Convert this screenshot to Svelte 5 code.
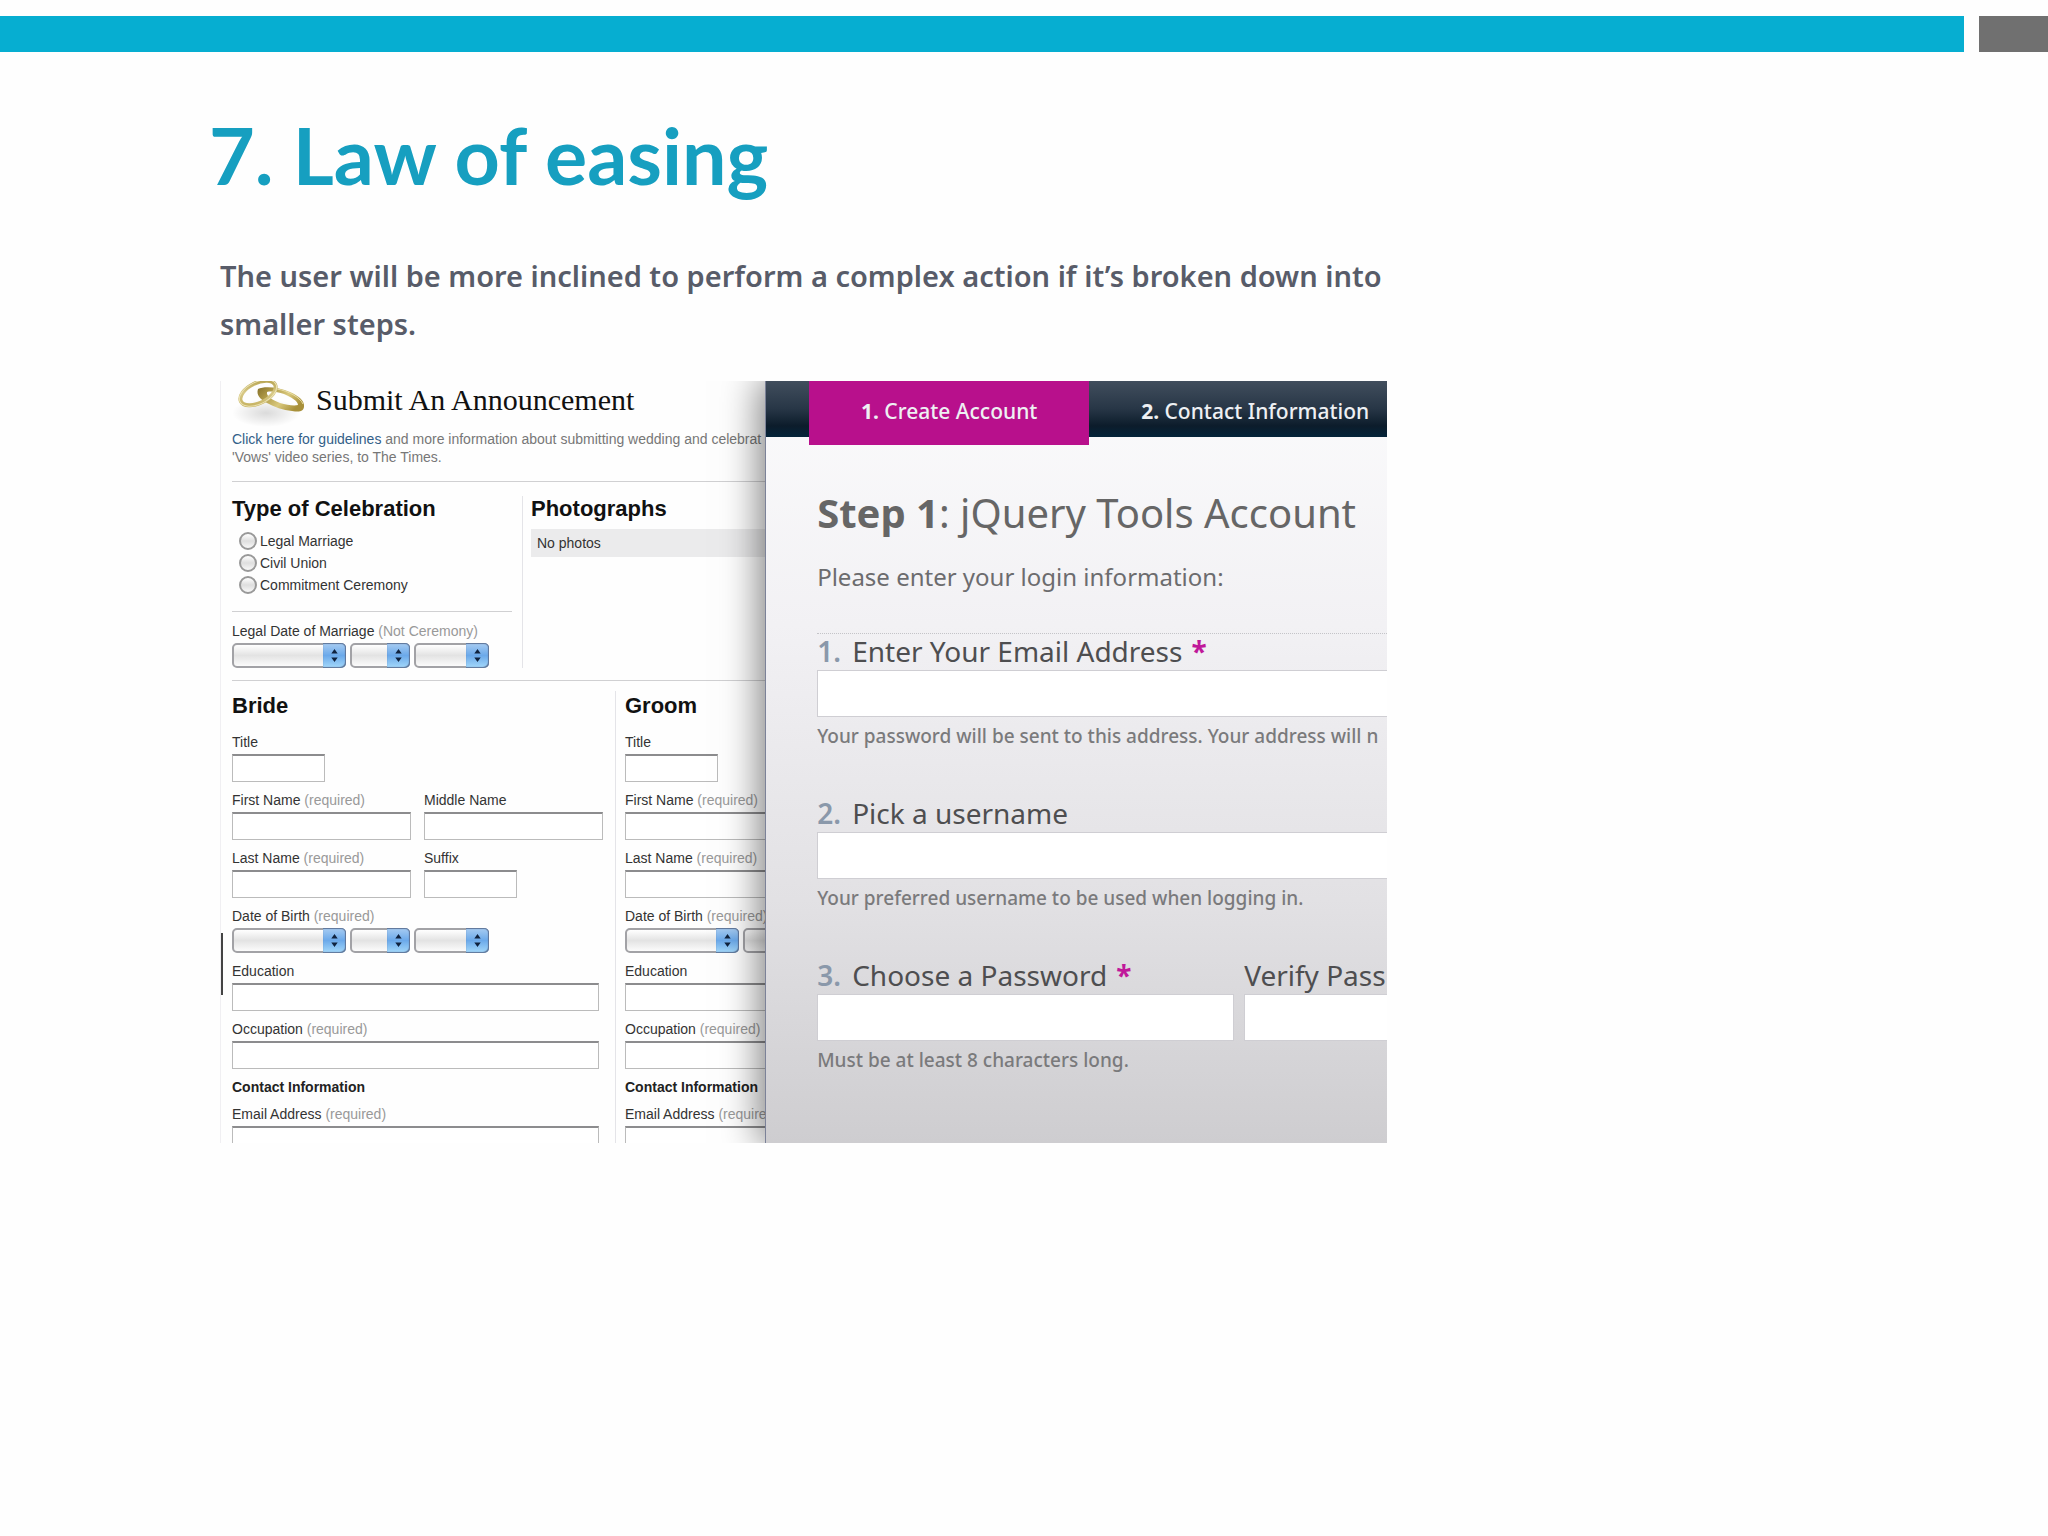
<script lang="ts">
	type Field = { label: string; required?: boolean; size: 'short' | 'medium' | 'wide' };

	const ceremonies = ['Legal Marriage', 'Civil Union', 'Commitment Ceremony'];
	const people = ['Bride', 'Groom'];
	const dateParts = ['month', 'day', 'year'];

	const nameRows: Field[][] = [
		[{ label: 'Title', size: 'short' }],
		[
			{ label: 'First Name', required: true, size: 'medium' },
			{ label: 'Middle Name', size: 'medium' }
		],
		[
			{ label: 'Last Name', required: true, size: 'medium' },
			{ label: 'Suffix', size: 'short' }
		]
	];

	const detailRows: Field[][] = [
		[{ label: 'Education', size: 'wide' }],
		[{ label: 'Occupation', required: true, size: 'wide' }]
	];

	const contactRows: Field[][] = [[{ label: 'Email Address', required: true, size: 'wide' }]];
</script>

{#snippet dateSelects(name: string)}
	<div class="selects">
		{#each dateParts as part}
			<span class="select {part}">
				<select aria-label="{name} {part}"><option></option></select>
				<svg viewBox="0 0 23 25" aria-hidden="true">
					<path d="M11.5 6l3.2 4.5H8.3zM11.5 19l3.2-4.5H8.3z" fill="#10233f" />
				</svg>
			</span>
		{/each}
	</div>
{/snippet}

{#snippet fieldRows(rows: Field[][])}
	{#each rows as row}
		<div class="row">
			{#each row as field}
				<label class="field {field.size}">
					<span>{field.label} {#if field.required}<small>(required)</small>{/if}</span>
					<input type="text" />
				</label>
			{/each}
		</div>
	{/each}
{/snippet}

<div class="slide">
	<div class="ribbon">
		<div class="ribbon-main"></div>
		<div class="ribbon-end"></div>
	</div>

	<main>
		<h1>7. Law of easing</h1>
		<p class="lead">
			The user will be more inclined to perform a complex action if it’s broken down into<br />
			smaller steps.
		</p>

		<div class="figure">
			<form class="announcement">
				<header>
					<svg class="rings" viewBox="0 0 76 48" aria-hidden="true">
						<defs>
							<linearGradient id="band" x1="0" y1="0" x2="1" y2="0.5">
								<stop offset="0" stop-color="#85702a" />
								<stop offset="0.3" stop-color="#b09b48" />
								<stop offset="0.65" stop-color="#d9c87c" />
								<stop offset="1" stop-color="#a8903a" />
							</linearGradient>
							<linearGradient id="loop" x1="0" y1="1" x2="1" y2="0">
								<stop offset="0" stop-color="#c0ab55" />
								<stop offset="0.5" stop-color="#d8c987" />
								<stop offset="1" stop-color="#ab973f" />
							</linearGradient>
							<radialGradient id="shade">
								<stop offset="0" stop-color="#000" stop-opacity="0.14" />
								<stop offset="1" stop-color="#000" stop-opacity="0" />
							</radialGradient>
						</defs>
						<ellipse cx="34" cy="32" rx="34" ry="14" fill="url(#shade)" />
						<path
							d="M26 8C32 5 47 6 58 11c9 4 15 9 14 15-1 5-5 5-12 4-9-1-18-4-25-8-7-4-11-8-9-14zm9 3c-1 4 5 8 13 11 7 2 14 3 18 2 0-4-7-8-14-11-6-2-13-3-17-2z"
							fill="url(#band)"
							fill-rule="evenodd"
						/>
						<path d="M45 8c11 2 23 8 26 15" fill="none" stroke="#e9dfa6" stroke-width="1" />
						<ellipse
							cx="26"
							cy="12"
							rx="19"
							ry="10"
							transform="rotate(-26 26 12)"
							fill="none"
							stroke="url(#loop)"
							stroke-width="4"
						/>
						<ellipse
							cx="26"
							cy="12"
							rx="20"
							ry="11"
							transform="rotate(-26 26 12)"
							fill="none"
							stroke="#ece3b4"
							stroke-width="1"
						/>
					</svg>
					<h2>Submit An Announcement</h2>
				</header>
				<p class="intro">
					<a href="#guidelines">Click here for guidelines</a> and more information about submitting wedding and celebrat<br />
					'Vows' video series, to The Times.
				</p>

				<section class="celebration">
					<div class="type">
						<h3>Type of Celebration</h3>
						<div class="radios">
							{#each ceremonies as ceremony}
								<label><input type="radio" name="ceremony" value={ceremony} />{ceremony}</label>
							{/each}
						</div>
						<div class="legal-date">
							<div class="caption">Legal Date of Marriage <small>(Not Ceremony)</small></div>
							{@render dateSelects('Marriage')}
						</div>
					</div>
					<div class="photos">
						<h3>Photographs</h3>
						<div class="no-photos">No photos</div>
					</div>
				</section>

				<section class="couple">
					{#each people as person}
						<div class="person">
							<h3>{person}</h3>
							{@render fieldRows(nameRows)}
							<div class="date">
								<div class="caption">Date of Birth <small>(required)</small></div>
								{@render dateSelects(`${person} birth`)}
							</div>
							{@render fieldRows(detailRows)}
							<h4>Contact Information</h4>
							{@render fieldRows(contactRows)}
						</div>
					{/each}
				</section>
			</form>

			<form class="account">
				<nav>
					<button type="button" class="active"><b>1.</b> Create Account</button>
					<button type="button"><b>2.</b> Contact Information</button>
				</nav>
				<div class="steps">
					<h2><b>Step 1</b>: jQuery Tools Account</h2>
					<p class="prompt">Please enter your login information:</p>
					<ol>
						<li>
							<label for="email"><i>1.</i>Enter Your Email Address <em>*</em></label>
							<input id="email" type="text" />
							<p>Your password will be sent to this address. Your address will n</p>
						</li>
						<li>
							<label for="username"><i>2.</i>Pick a username</label>
							<input id="username" type="text" />
							<p>Your preferred username to be used when logging in.</p>
						</li>
						<li class="passwords">
							<div>
								<label for="password"><i>3.</i>Choose a Password <em>*</em></label>
								<input id="password" type="password" />
								<p>Must be at least 8 characters long.</p>
							</div>
							<div>
								<label for="verify">Verify Pass</label>
								<input id="verify" type="password" />
							</div>
						</li>
					</ol>
				</div>
			</form>
		</div>
	</main>
</div>

<style>
	:global(body) {
		background: #fefefe;
	}

	.slide {
		min-height: 100vh;
		box-sizing: border-box;
		padding-top: 16px;
		overflow: hidden;
	}

	h1,
	h2,
	h3,
	h4,
	p,
	ol {
		margin: 0;
		padding: 0;
	}

	input,
	select {
		box-sizing: border-box;
		margin: 0;
	}

	.ribbon {
		display: flex;
		gap: 15px;
		height: 36px;
	}

	.ribbon-main {
		flex: 1;
		background: #06aed1;
	}

	.ribbon-end {
		width: 69px;
		background: #707070;
	}

	main {
		padding: 54px 220px 0;
	}

	h1 {
		margin-left: -11px;
		font: 700 79px/98px Lato, sans-serif;
		color: #169fc0;
		white-space: nowrap;
	}

	.lead {
		margin-top: 48px;
		font: 600 29px/48px 'Noto Sans', sans-serif;
		color: #585c69;
		white-space: nowrap;
	}

	.figure {
		display: grid;
		grid-template-columns: 546fr 621fr;
		width: 57vw;
		aspect-ratio: 1167 / 762;
		margin-top: 33px;
		overflow: hidden;
	}

	/* wedding announcement form */
	.announcement {
		position: relative;
		min-width: 0;
		min-height: 0;
		padding-left: 11px;
		border-left: 1px solid #f0eff2;
		overflow: hidden;
		font: 14px/18px 'Liberation Sans', Arial, sans-serif;
		color: #333;
		white-space: nowrap;
	}

	.announcement::before {
		content: '';
		position: absolute;
		left: 0;
		top: 552px;
		width: 2px;
		height: 62px;
		background: #444;
	}

	.announcement header {
		display: flex;
		height: 49px;
	}

	.rings {
		width: 76px;
		height: 48px;
		margin-right: 8px;
	}

	.announcement h2 {
		font: 400 30px/38px 'Liberation Serif', Georgia, serif;
		color: #111;
	}

	.intro {
		color: #777;
	}

	.intro a {
		color: #336088;
		text-decoration: none;
	}

	.announcement h3 {
		font-size: 22px;
		line-height: 26px;
		color: #111;
	}

	.announcement small {
		font-size: 14px;
		color: #999;
	}

	.celebration {
		display: flex;
		margin-top: 15px;
		padding: 14px 0 12px;
		border: solid #d0d0d2;
		border-width: 1px 0;
	}

	.type {
		flex: none;
		width: 280px;
		padding-right: 10px;
		border-right: 1px solid #e4e4e8;
	}

	.radios {
		margin-top: 8px;
		padding: 0 0 15px 7px;
		border-bottom: 1px solid #d0d0d2;
	}

	.radios label {
		display: flex;
		align-items: center;
		gap: 3px;
		height: 22px;
	}

	.radios input {
		appearance: none;
		width: 18px;
		height: 18px;
		border: 2px solid #999;
		border-radius: 50%;
		background: linear-gradient(#fff, #dedede 50%, #f8f8f8);
	}

	.legal-date {
		margin-top: 10px;
	}

	.photos {
		flex: 1;
		padding-left: 8px;
	}

	.no-photos {
		margin-top: 7px;
		padding: 5px 6px;
		background: #ebebec;
	}

	.selects {
		display: flex;
		gap: 4px;
		margin-top: 3px;
	}

	.select {
		position: relative;
		flex: none;
		height: 25px;
	}

	.select select {
		appearance: none;
		display: block;
		width: 100%;
		height: 100%;
		border: 2px solid #a2a2a6;
		border-radius: 5px;
		background: linear-gradient(#fff, #e3e3e3 50%, #fbfbfb);
	}

	.select svg {
		position: absolute;
		top: 0;
		right: 0;
		width: 23px;
		height: 25px;
		border-radius: 0 5px 5px 0;
		background: linear-gradient(#a9cdf2, #6ba9ea 50%, #a5dafb);
		box-shadow: inset -1px -1px 1px #5d7396, inset 0 1px 1px #5d7396;
		pointer-events: none;
	}

	.month {
		width: 114px;
	}

	.day {
		width: 60px;
	}

	.year {
		width: 75px;
	}

	.couple {
		display: flex;
		margin-top: 10px;
	}

	.person {
		display: flex;
		flex: none;
		flex-direction: column;
		gap: 9px;
		width: 383px;
	}

	.person + .person {
		padding-left: 9px;
		border-left: 1px solid #e4e4e8;
	}

	.person h3 {
		margin: 2px 0 5px;
	}

	.person h4 {
		font-size: 14px;
		color: #222;
	}

	.row {
		display: flex;
		gap: 13px;
	}

	.field {
		display: flex;
		flex-direction: column;
		gap: 3px;
	}

	.field input {
		width: 100%;
		height: 28px;
		border: 1px solid #bbb;
		border-top: 2px solid #8c8c8e;
		background: #fff;
	}

	.short {
		width: 93px;
	}

	.medium {
		width: 179px;
	}

	.wide {
		width: 367px;
	}

	/* account wizard */
	.account {
		position: relative;
		min-width: 0;
		background: linear-gradient(#fbfbfc, #f2f1f4 32%, #e2e1e4 68%, #cecdd0);
		box-shadow: -1px 0 0 #7c8298, -4px 0 36px 2px rgb(0, 0, 0, 0.5);
		font-family: 'Noto Sans', sans-serif;
		color: #5c5c5e;
		white-space: nowrap;
	}

	nav {
		display: flex;
		align-items: flex-start;
		height: 56px;
		padding-left: 43px;
		background: linear-gradient(#414e5d, #273646 50%, #0c1c2b 80%, #04243a);
	}

	nav button {
		flex: none;
		height: 56px;
		padding: 4px 52px 0;
		border: 0;
		background: none;
		font: 500 21px/24px 'Noto Sans', sans-serif;
		color: #eef0f3;
	}

	nav .active {
		width: 280px;
		height: 64px;
		padding: 4px 0 8px;
		background: #b8108c;
	}

	.steps {
		padding: 52px 0 0 51px;
	}

	.steps h2 {
		font-size: 40px;
		font-weight: 400;
		line-height: 48px;
		color: #666;
	}

	.prompt {
		margin-top: 24px;
		font-size: 24px;
		line-height: 32px;
		color: #6c6c6e;
	}

	ol {
		display: flex;
		flex-direction: column;
		gap: 48px;
		margin-top: 40px;
		border-top: 1px dotted #c4c4c8;
		list-style: none;
	}

	ol label {
		display: flex;
		gap: 9px;
		font-size: 28px;
		line-height: 34px;
		color: #4e4e50;
	}

	ol i {
		width: 26px;
		font-style: normal;
		font-weight: 600;
		color: #8a98aa;
	}

	ol em {
		font-style: normal;
		font-weight: 700;
		color: #c0189a;
	}

	ol input {
		display: block;
		width: 720px;
		height: 47px;
		margin-top: 2px;
		border: 1px solid #cfced3;
		background: #fff;
	}

	ol p {
		margin-top: 7px;
		font-size: 19px;
		font-weight: 500;
		line-height: 24px;
		color: #7a7a7c;
	}

	.passwords {
		display: flex;
		gap: 10px;
	}

	.passwords input {
		width: 417px;
	}
</style>
